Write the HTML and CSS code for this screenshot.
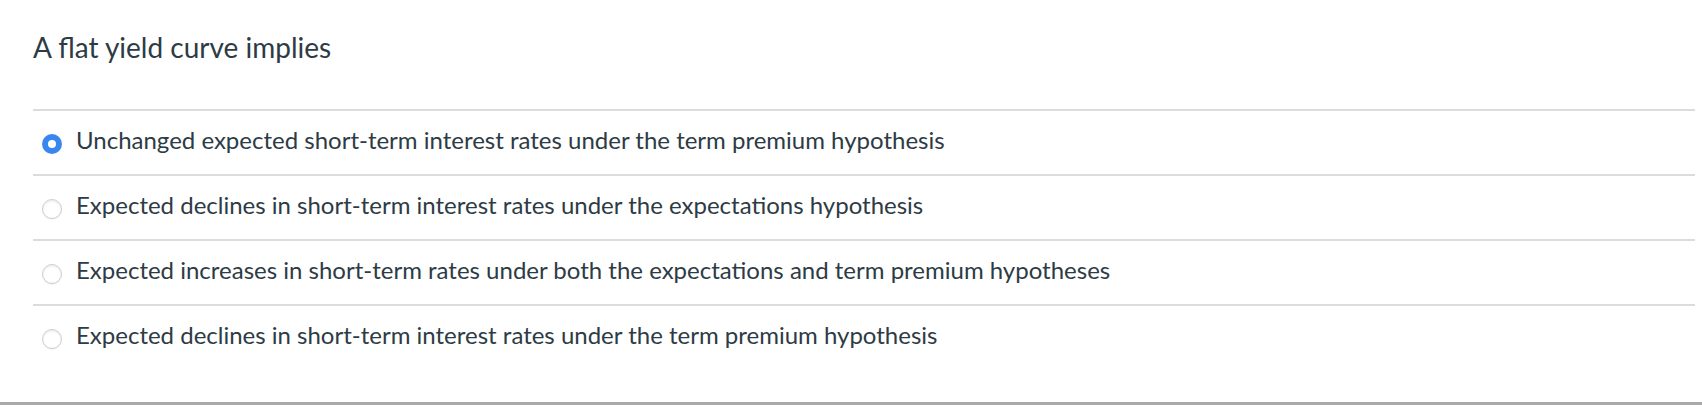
FILE: index.html
```html
<!DOCTYPE html>
<html lang="en">
<head>
<meta charset="utf-8">
<title>Quiz question</title>
<link rel="stylesheet" href="styles.css">
</head>
<body>
<div class="question">
  <div class="question-text">A flat yield curve implies</div>
  <div class="answers">
    <label class="answer">
      <span class="radio radio-checked"></span>
      <span class="answer-text">Unchanged expected short-term interest rates under the term premium hypothesis</span>
    </label>
    <label class="answer">
      <span class="radio"></span>
      <span class="answer-text">Expected declines in short-term interest rates under the expectations hypothesis</span>
    </label>
    <label class="answer">
      <span class="radio"></span>
      <span class="answer-text">Expected increases in short-term rates under both the expectations and term premium hypotheses</span>
    </label>
    <label class="answer">
      <span class="radio"></span>
      <span class="answer-text">Expected declines in short-term interest rates under the term premium hypothesis</span>
    </label>
  </div>
</div>
<div class="divider"></div>
</body>
</html>
```

FILE: styles.css
```css
html, body {
  margin: 0;
  padding: 0;
  background: #ffffff;
}

body {
  font-family: Lato, "Liberation Sans", sans-serif;
  color: #2d3b45;
}

.question {
  padding: 0 7px 0 33px;
  height: 402px;
  box-sizing: border-box;
}

.question-text {
  font-size: 28px;
  line-height: 34px;
  padding-top: 30px;
  height: 109px;
  box-sizing: border-box;
}

.answers {
  display: flex;
  flex-direction: column;
}

.answer {
  display: flex;
  align-items: flex-start;
  height: 65px;
  box-sizing: border-box;
  border-top: 2px solid #dcdcdc;
  padding-left: 9px;
}

.radio {
  flex: none;
  width: 20px;
  height: 20px;
  box-sizing: border-box;
  border-radius: 50%;
  border: 1px solid #cfcfcf;
  background: #ffffff;
  box-shadow: inset 0 1px 2px rgba(0, 0, 0, 0.10), 0 1px 1px rgba(0, 0, 0, 0.05);
  margin-top: 23px;
  margin-right: 14px;
}

.radio-checked {
  border: 6px solid #3a86f0;
  box-shadow: none;
  background: #ffffff;
}

.answer-text {
  font-size: 24px;
  line-height: 30px;
  margin-top: 14px;
}

.divider {
  height: 3px;
  background: #a9a9a9;
}
```
